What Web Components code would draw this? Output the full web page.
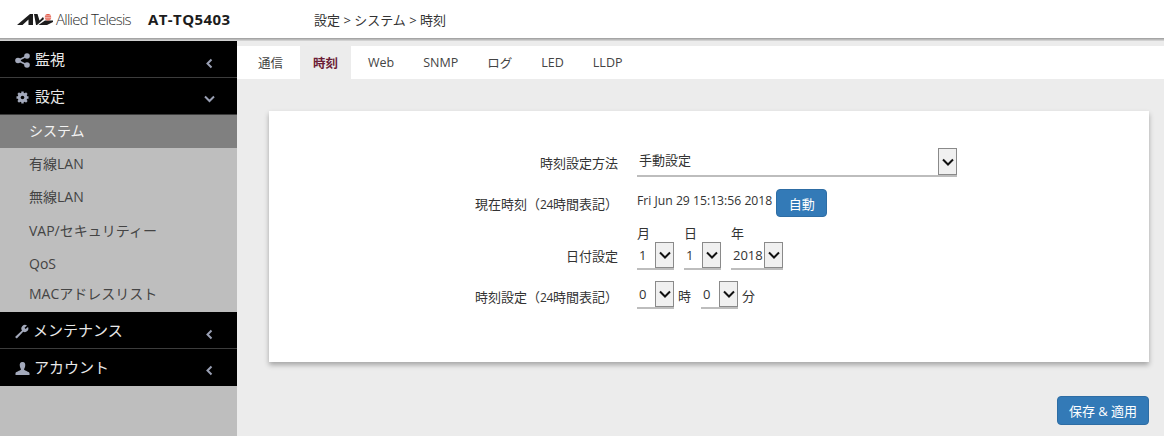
<!DOCTYPE html>
<html lang="ja">
<head>
<meta charset="utf-8">
<title>AT-TQ5403</title>
<style>
	html, body { margin: 0; height: 100%; }
	body {
		width: 1164px;
		height: 436px;
		overflow: hidden;
		background: #ececec;
		color: #333;
		font: 13px "Open Sans", "Noto Sans CJK JP", sans-serif;
	}
	app-shell { height: 436px; }
	.n24 { font-size: 12px; letter-spacing: -.4px; }
	.ico { margin: 4px 5px 0 0; flex: none; }
	.ico.kana { margin-right: 4px; }
</style>
</head>
<body>

<template id="shell-tpl">
	<style>
		:host { display: flex; flex-direction: column; }
		.body { display: flex; flex: 1; min-height: 0; }
		.main { flex: 1; min-width: 0; display: flex; flex-direction: column; }
	</style>
	<slot name="top"></slot>
	<div class="body">
		<slot name="side"></slot>
		<div class="main"><slot></slot></div>
	</div>
</template>

<template id="top-tpl">
	<style>
		:host {
			display: flex;
			align-items: center;
			box-sizing: border-box;
			height: 41px;
			flex: none;
			background: linear-gradient(#fff 38px, #9a9a9a 38px, #dcdcdc 41px);
			padding: 0 0 3px 17px;
		}
		svg { display: block; flex: none; }
		.brand { font-size: 15px; letter-spacing: -0.75px; margin-left: 3px; color: #2e2e2e; font-weight: 300; width: 92px; white-space: nowrap; }
		.model { font-size: 15px; font-weight: 700; color: #1c1c1c; width: 166px; white-space: nowrap; letter-spacing: .4px; }
		.crumb { font-size: 13px; color: #333; }
	</style>
	<svg width="36" height="11" viewBox="0 0 36 11">
		<path d="M0 11 L13 0 H16 V11 H11.500 V5.500 L5.500 11Z" fill="#1d1d1d"/>
		<path d="M17 0 H20.500 L22.500 6.500 L26 3 L27 5 L20 11 H19Z" fill="#1d1d1d"/>
		<path d="M21.500 11 L28 6.500 H36 V8 L30 11Z" fill="#1d1d1d"/>
		<circle cx="31" cy="3.200" r="3.200" fill="#e2503e"/>
		<path d="M27 1.800h9M27 3.400h9M27 5h9" stroke="#fff" stroke-width=".6"/>
	</svg>
	<span class="brand">Allied Telesis</span>
	<span class="model"><slot name="model"></slot></span>
	<span class="crumb"><slot></slot></span>
</template>

<template id="side-tpl">
	<style>
		:host { display: block; width: 237px; flex: none; background: #bebebe; }
	</style>
	<slot></slot>
</template>

<template id="head-tpl">
	<style>
		:host {
			display: flex;
			align-items: center;
			box-sizing: border-box;
			height: 37px;
			background: #000;
			color: #e8e8e8;
			font-size: 15px;
			padding: 0 22px 1px 15px;
			border-bottom: 1px solid #3c3c3c;
		}
		:host([last]) { border-bottom: 0; padding-bottom: 3px; }
		.label { flex: 1; }
		.arrow { width: 11px; height: 11px; margin-top: 9px; fill: none; stroke: #9aa0b4; stroke-width: 2; }
	</style>
	<slot name="icon"></slot>
	<span class="label"><slot></slot></span>
	<svg class="arrow" viewBox="0 0 11 11"><path id="chev" d="M7.500 1.500 L3.500 5.500 L7.500 9.500"/></svg>
</template>

<template id="item-tpl">
	<style>
		:host {
			display: flex;
			align-items: center;
			box-sizing: border-box;
			height: 33px;
			padding-left: 29px;
			color: #444;
			font-size: 14px;
		}
		:host([active]) { background: #808080; color: #f2f2f2; }
	</style>
	<slot></slot>
</template>

<template id="tabs-tpl">
	<style>
		:host {
			display: flex;
			height: 33px;
			flex: none;
			margin-top: 5px;
			background: #fff;
			padding-left: 6.500px;
		}
	</style>
	<slot></slot>
</template>

<template id="tab-tpl">
	<style>
		:host {
			display: flex;
			align-items: center;
			box-sizing: border-box;
			padding: 0 14.500px;
			font-size: 12.500px;
			color: #444;
		}
		:host([active]) { background: #ececec; color: #6b1c35; font-weight: 700; padding: 0 13px; margin: 0 2.500px; }
	</style>
	<slot></slot>
</template>

<template id="card-tpl">
	<style>
		:host {
			display: block;
			box-sizing: border-box;
			width: 880px;
			height: 251px;
			margin: 32px 0 0 32px;
			flex: none;
			background: #fff;
			box-shadow: 0 3px 5px rgba(0,0,0,.3);
			padding-top: 37px;
		}
	</style>
	<slot></slot>
</template>

<template id="row-tpl">
	<style>
		:host {
			display: grid;
			grid-template-columns: 349px 1fr;
			column-gap: 19px;
			align-items: center;
			font-size: 13px;
			color: #333;
		}
		.label { text-align: right; white-space: nowrap; }
		.value { display: flex; align-items: center; }
		:host([bottom]) { align-items: end; }
		:host([bottom]) .label { padding-bottom: 5px; }
	</style>
	<span class="label"><slot name="label"></slot></span>
	<div class="value"><slot></slot></div>
</template>

<template id="sel-tpl">
	<style>
		:host {
			display: inline-flex;
			box-sizing: border-box;
			height: 28px;
			border-bottom: 2px solid #bdbdbd;
			font-size: 13px;
			color: #333;
			flex: none;
		}
		.val { flex: 1; display: flex; align-items: center; padding: 0 0 1px 2px; white-space: nowrap; min-width: 0; }
		.btn {
			box-sizing: border-box;
			flex: none;
			width: 19px;
			background: #f0f0f0;
			border: 1px solid #8a8a8a;
			display: flex;
			align-items: center;
			justify-content: center;
		}
		svg { width: 12px; height: 8px; fill: none; stroke: #111; stroke-width: 2; }
	</style>
	<span class="val"><slot></slot></span>
	<span class="btn"><svg viewBox="0 0 12 8"><path d="M1 1.500 L6 6.500 L11 1.500"/></svg></span>
</template>

<template id="btn-tpl">
	<style>
		:host {
			display: inline-flex;
			align-items: center;
			justify-content: center;
			box-sizing: border-box;
			background: #337ab7;
			border: 1px solid #2e6da4;
			border-radius: 4px;
			color: #fff;
			font-size: 13px;
			height: 28px;
			flex: none;
		}
	</style>
	<slot></slot>
</template>

<template id="date-tpl">
	<style>
		:host { display: inline-flex; flex-direction: column; flex: none; }
		.cap { font-size: 13px; line-height: 17px; height: 17px; color: #333; }
	</style>
	<span class="cap"><slot name="cap"></slot></span>
	<slot></slot>
</template>

<template id="foot-tpl">
	<style>
		:host { display: flex; justify-content: flex-end; padding: 34px 15px 0 0; }
	</style>
	<slot></slot>
</template>

<app-shell>
	<top-bar slot="top">
		<span slot="model">AT-TQ5403</span>
		設定 &gt; システム &gt; 時刻
	</top-bar>
	<side-nav slot="side">
		<nav-head>
			<svg class="ico" slot="icon" width="15" height="15" viewBox="0 0 15 15"><g fill="#a3a9bb"><circle cx="3" cy="7.500" r="2.800"/><circle cx="12" cy="3" r="2.800"/><circle cx="12" cy="12" r="2.800"/></g><path d="M3 7.500 L12 3 M3 7.500 L12 12" stroke="#a3a9bb" stroke-width="1.600"/></svg>
			監視
		</nav-head>
		<nav-head open>
			<svg class="ico" slot="icon" width="15" height="15" viewBox="0 0 15 15"><circle cx="7.500" cy="7.500" r="3.400" fill="none" stroke="#a3a9bb" stroke-width="2.800"/><path d="M7.500 1.500v12M1.500 7.500h12M3.200 3.200l8.600 8.600M11.800 3.200l-8.600 8.600" stroke="#a3a9bb" stroke-width="2.400"/><circle cx="7.500" cy="7.500" r="1.800" fill="#000"/></svg>
			設定
		</nav-head>
		<nav-item active style="padding-bottom:4px">システム</nav-item>
		<nav-item style="padding-bottom:4px">有線LAN</nav-item>
		<nav-item style="padding-bottom:4px">無線LAN</nav-item>
		<nav-item style="padding-bottom:2px">VAP/セキュリティー</nav-item>
		<nav-item>QoS</nav-item>
		<nav-item style="height:32px;padding-bottom:6px">MACアドレスリスト</nav-item>
		<nav-head>
			<svg class="ico kana" slot="icon" width="15" height="15" viewBox="0 0 15 15" style="margin-left:-1px"><path d="M1 13 L8 6.500 A3.600 3.600 0 0 1 13 1.500 L10.500 3.800 L11.500 5 L14 3 A3.600 3.600 0 0 1 9.200 7.800 L2.800 14.500 Z" fill="#a3a9bb"/></svg>
			メンテナンス
		</nav-head>
		<nav-head last>
			<svg class="ico kana" slot="icon" width="15" height="15" viewBox="0 0 15 15"><path d="M7.500 1 C5 1 4.500 3 4.800 5 C5 6.500 5.800 7.500 6 8.500 C5 10 1 10.500 .5 12 V14 H14.500 V12 C14 10.500 10 10 9 8.500 C9.200 7.500 10 6.500 10.200 5 C10.500 3 10 1 7.500 1Z" fill="#a3a9bb"/></svg>
			アカウント
		</nav-head>
	</side-nav>

	<tab-bar>
		<tab-item>通信</tab-item>
		<tab-item active>時刻</tab-item>
		<tab-item>Web</tab-item>
		<tab-item>SNMP</tab-item>
		<tab-item>ログ</tab-item>
		<tab-item>LED</tab-item>
		<tab-item>LLDP</tab-item>
	</tab-bar>

	<form-card>
		<form-row style="margin-bottom:12px">
			<span slot="label">時刻設定方法</span>
			<fake-select style="width:320px;height:29px"><span style="padding-bottom:3px">手動設定</span></fake-select>
		</form-row>
		<form-row style="margin-bottom:8px">
			<span slot="label">現在時刻（<span class="n24">24</span>時間表記）</span>
			<span style="white-space:nowrap;font-size:12.200px;padding-bottom:6px">Fri Jun 29 15:13:56 2018</span>
			<app-btn style="width:51px;margin-left:4px">自動</app-btn>
		</form-row>
		<form-row bottom style="margin-bottom:11px">
			<span slot="label">日付設定</span>
			<date-part style="margin-right:10px"><span slot="cap">月</span><fake-select style="width:37px">1</fake-select></date-part>
			<date-part style="margin-right:10px"><span slot="cap">日</span><fake-select style="width:37px">1</fake-select></date-part>
			<date-part><span slot="cap">年</span><fake-select style="width:52px">2018</fake-select></date-part>
		</form-row>
		<form-row>
			<span slot="label"><span style="display:inline-block;padding-top:2px">時刻設定（<span class="n24">24</span>時間表記）</span></span>
			<fake-select style="width:37px">0</fake-select>
			<span style="margin:0 10px 0 4px">時</span>
			<fake-select style="width:37px">0</fake-select>
			<span style="margin-left:4px">分</span>
		</form-row>
	</form-card>

	<page-foot>
		<app-btn style="width:92px;height:29px">保存 &amp; 適用</app-btn>
	</page-foot>
</app-shell>

<script>
	// plain wrappers, each one clones its template into an open shadow root
	const parts = {
		'app-shell': 'shell-tpl',
		'top-bar': 'top-tpl',
		'side-nav': 'side-tpl',
		'nav-item': 'item-tpl',
		'tab-bar': 'tabs-tpl',
		'tab-item': 'tab-tpl',
		'form-card': 'card-tpl',
		'form-row': 'row-tpl',
		'fake-select': 'sel-tpl',
		'app-btn': 'btn-tpl',
		'date-part': 'date-tpl',
		'page-foot': 'foot-tpl'
	}

	class Part extends HTMLElement {
		constructor() {
			super()
			const tpl = document.getElementById(parts[this.localName])
			this.attachShadow({ mode: 'open' }).appendChild(tpl.content.cloneNode(true))
		}
	}

	for (const name in parts) {
		customElements.define(name, class extends Part {})
	}

	class NavHead extends HTMLElement {
		constructor() {
			super()
			const tpl = document.getElementById('head-tpl')
			this.attachShadow({ mode: 'open' }).appendChild(tpl.content.cloneNode(true))
			if (this.hasAttribute('open')) {
				this.shadowRoot.getElementById('chev').setAttribute('d', 'M1 1.500 L5.500 6 L10 1.500')
			}
		}
	}
	customElements.define('nav-head', NavHead)
</script>
</body>
</html>
